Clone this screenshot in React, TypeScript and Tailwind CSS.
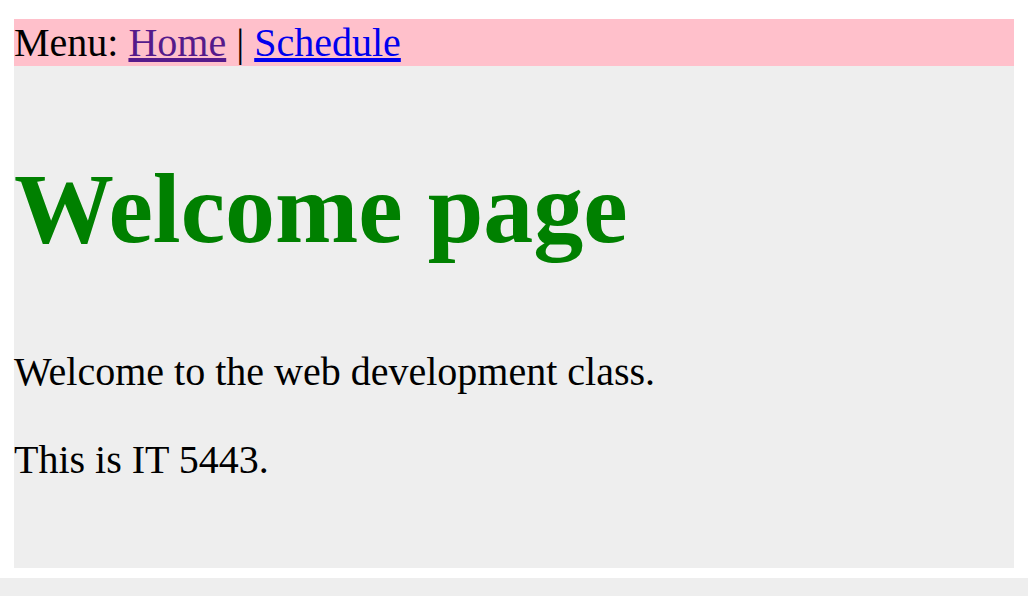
import React from 'react';

export default function App() {
  return (
    <div className="bg-white min-h-screen font-['Liberation_Serif','Times_New_Roman',serif] text-black">
      <div className="px-[14px] pt-[19px]">
        {/* Menu bar */}
        <nav className="bg-[#ffc0cb] h-[47px] text-[40px] leading-[48px]">
          Menu:{' '}
          <a href="#" className="text-[#551a8b] underline">Home</a>
          {' | '}
          <a href="#" className="text-[#0000ee] underline">Schedule</a>
        </nav>

        {/* Content */}
        <main className="bg-[#eeeeee] h-[502px] pt-[85px]">
          <h1 className="text-[100px] font-bold leading-[115px] text-[#008000]">Welcome page</h1>
          <p className="mt-[83px] text-[40px] leading-[46px]">Welcome to the web development class.</p>
          <p className="mt-[42px] text-[40px] leading-[46px]">This is IT 5443.</p>
        </main>
      </div>

      {/* Footer strip */}
      <div className="mt-[10px] bg-[#eeeeee] h-[40px]" />
    </div>
  );
}
